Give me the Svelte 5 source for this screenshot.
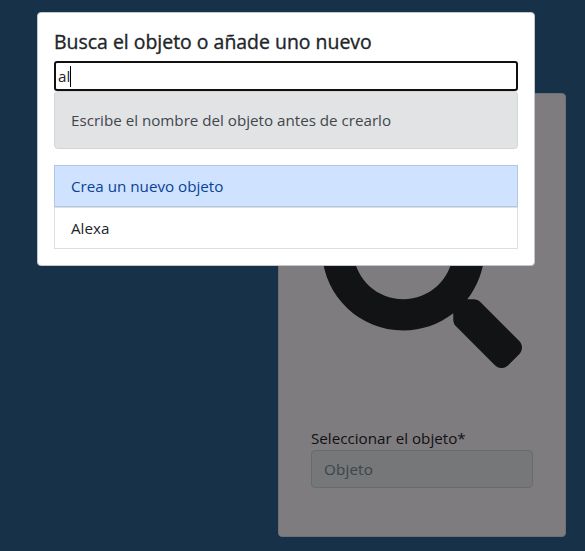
<script>
  let query = 'al';
  const results = ['Alexa'];
</script>

<main class="page">
  <section class="card">
    <svg class="search" viewBox="0 0 512 512" aria-hidden="true">
      <path fill="currentColor" d="M505 442.7L405.3 343c-4.5-4.5-10.6-7-17-7H372c27.6-35.3 44-79.7 44-128C416 93.1 322.9 0 208 0S0 93.1 0 208s93.1 208 208 208c48.3 0 92.7-16.4 128-44v16.3c0 6.4 2.5 12.5 7 17l99.7 99.7c9.4 9.4 24.6 9.4 33.9 0l28.3-28.3c9.4-9.4 9.4-24.6.1-34zM208 336c-70.7 0-128-57.2-128-128 0-70.7 57.2-128 128-128 70.7 0 128 57.2 128 128 0 70.7-57.2 128-128 128z" />
    </svg>
    <div class="label">Seleccionar el objeto*</div>
    <div class="field">Objeto</div>
  </section>

  <div class="modal">
    <h5>Busca el objeto o añade uno nuevo</h5>
    <div class="query"><span>{query}</span><i class="caret"></i></div>
    <div class="alert">Escribe el nombre del objeto antes de crearlo</div>
    <ul>
      <li class="create">Crea un nuevo objeto</li>
      {#each results as item}
        <li>{item}</li>
      {/each}
    </ul>
  </div>
</main>

<style>
  :global(body) { margin: 0; overflow: hidden; }
  * { box-sizing: border-box; }
  .page {
    position: relative;
    display: flex;
    justify-content: flex-end;
    align-items: flex-start;
    width: 585px;
    height: 551px;
    padding: 93px 19px 0 0;
    background: #173149;
    font: 15.2px/24px "Open Sans", "Noto Sans", sans-serif;
    overflow: hidden;
  }
  .card {
    display: flex;
    flex-direction: column;
    width: 288px;
    height: 444px;
    padding: 74px 32px 48px;
    background: #7f7c7f;
    border: 1px solid #706f73;
    border-radius: 4px;
    color: #101113;
  }
  .search { width: 200px; height: 200px; margin: 0 auto 58px; flex: none; color: #111315; }
  .label { height: 24px; white-space: nowrap; }
  .field {
    height: 38px;
    padding: 6px 12px;
    background: #757778;
    border: 1px solid #676b6e;
    border-radius: 4px;
    color: #3d444a;
    letter-spacing: 0.15px;
  }
  .modal {
    position: absolute;
    left: 37px;
    top: 12px;
    width: 498px;
    height: 254px;
    padding: 16px;
    background: #fff;
    border: 1px solid #c3c7cb;
    border-radius: 4px;
    color: #212529;
    white-space: nowrap;
  }
  h5 {
    margin: 0 0 8px;
    font-size: 19.45px;
    line-height: 26px;
    height: 24px;
    font-weight: 500;
    -webkit-text-stroke: 0.35px currentColor;
  }
  .query {
    display: flex;
    align-items: center;
    height: 30px;
    padding: 0 2px;
    border: 2px solid #101010;
    border-radius: 3px;
  }
  .caret { width: 1px; height: 21px; background: #000; }
  .alert {
    height: 58px;
    padding: 16px;
    background: #e2e3e5;
    border: 1px solid #d3d6d8;
    border-radius: 4px;
    color: #41464b;
    font-size: 15.16px;
  }
  ul { margin: 16px 0 0; padding: 0; list-style: none; }
  li { height: 42px; padding: 8px 16px; border: 1px solid #dfdfdf; }
  .create { border-color: #b3c6e5; background: #cfe2ff; color: #084298; }
</style>
